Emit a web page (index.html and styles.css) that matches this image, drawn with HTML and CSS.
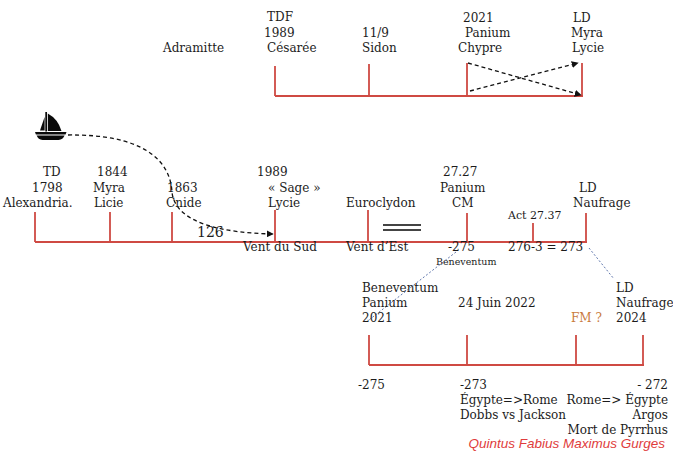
FILE: index.html
```html
<!DOCTYPE html>
<html lang="fr">
<head>
<meta charset="utf-8">
<title>Chronologie</title>
<link rel="stylesheet" href="styles.css">
</head>
<body>
<div class="canvas">
<svg class="diagram" width="673" height="461" viewBox="0 0 673 461" xmlns="http://www.w3.org/2000/svg">
  <defs>
    <marker id="arr" viewBox="0 0 10 10" refX="9" refY="5" markerWidth="7" markerHeight="7" orient="auto" markerUnits="userSpaceOnUse">
      <path d="M0,0 L10,5 L0,10 Z" fill="#111"/>
    </marker>
  </defs>

  <!-- top timeline -->
  <g class="red">
    <line x1="275" y1="96" x2="583" y2="96"/>
    <line x1="275" y1="66" x2="275" y2="96"/>
    <line x1="369" y1="64" x2="369" y2="96"/>
    <line x1="467" y1="63" x2="467" y2="96"/>
    <line x1="582" y1="63" x2="582" y2="96"/>
  </g>
  <g class="dash">
    <line x1="468" y1="63" x2="581" y2="95" marker-end="url(#arr)"/>
    <line x1="470" y1="91" x2="578" y2="63" marker-end="url(#arr)"/>
  </g>
  <g class="lbl">
    <text x="267" y="21">TDF</text>
    <text x="264" y="36.5">1989</text>
    <text x="267" y="51.5">Césarée</text>
    <text x="163" y="51.5">Adramitte</text>
    <text x="362" y="36.5">11/9</text>
    <text x="362" y="51.5">Sidon</text>
    <text x="463" y="21.5">2021</text>
    <text x="465" y="36.5">Panium</text>
    <text x="458" y="51.5">Chypre</text>
    <text x="573" y="21.5">LD</text>
    <text x="571" y="36.5">Myra</text>
    <text x="572" y="51.5">Lycie</text>
  </g>

  <!-- boat -->
  <g class="boat">
    <rect x="45.3" y="112" width="1.7" height="19.5"/>
    <path d="M47.8,113.5 Q58,119 61.5,131 L47.8,131 Z"/>
    <path d="M44.6,117 L44.6,130.5 L40,130.5 Z"/>
    <path d="M35,132 L66.5,132 L65.6,134.4 L35.9,134.4 Z"/>
    <path d="M36.6,135.6 L64.6,135.6 Q63,139.8 58.5,140 L42.5,140 Q38.2,139.8 36.6,135.6 Z"/>
  </g>
  <path class="dash" d="M68,135 C140,134 170,158 172,192 C175,224 225,233 273,234" marker-end="url(#arr)"/>

  <!-- main timeline -->
  <g class="red">
    <line x1="35" y1="242" x2="587" y2="242"/>
    <line x1="35" y1="212" x2="35" y2="242"/>
    <line x1="110" y1="212" x2="110" y2="242"/>
    <line x1="172" y1="212" x2="172" y2="242"/>
    <line x1="275" y1="210" x2="275" y2="242"/>
    <line x1="368" y1="210" x2="368" y2="242"/>
    <line x1="467" y1="213" x2="467" y2="242"/>
    <line x1="533" y1="223" x2="533" y2="242"/>
    <line x1="586" y1="213" x2="586" y2="242"/>
  </g>
  <g class="eq">
    <line x1="383" y1="225" x2="421" y2="225"/>
    <line x1="383" y1="230" x2="421" y2="230"/>
  </g>
  <g class="lbl">
    <text x="43" y="176">TD</text>
    <text x="32" y="191.5">1798</text>
    <text x="3" y="206.5">Alexandria.</text>
    <text x="97" y="176">1844</text>
    <text x="93" y="191.5">Myra</text>
    <text x="94" y="206.5">Licie</text>
    <text x="167" y="191.5">1863</text>
    <text x="166" y="206.5">Cnide</text>
    <text x="257" y="176">1989</text>
    <text x="268" y="191.5">« Sage »</text>
    <text x="268" y="206.5">Lycie</text>
    <text x="243" y="251">Vent du Sud</text>
    <text x="346" y="206.5">Euroclydon</text>
    <text x="346" y="251">Vent d’Est</text>
    <text x="443" y="176">27.27</text>
    <text x="440" y="191.5">Panium</text>
    <text x="452" y="206.5">CM</text>
    <text x="579" y="191.5">LD</text>
    <text x="573" y="206.5">Naufrage</text>
    <text x="448" y="251">-275</text>
    <text x="508" y="251">276-3 = 273</text>
  </g>
  <text class="lbl big" x="197" y="236.5">126</text>
  <text class="lbl mid" x="508" y="219">Act 27.37</text>
  <text class="lbl small" x="436" y="264.5">Beneventum</text>

  <g class="dot">
    <line x1="456" y1="252" x2="369" y2="320"/>
    <line x1="589" y1="248" x2="614" y2="279"/>
  </g>

  <!-- bottom timeline -->
  <g class="red">
    <line x1="369" y1="365" x2="644" y2="365"/>
    <line x1="369" y1="335" x2="369" y2="365"/>
    <line x1="467" y1="335" x2="467" y2="365"/>
    <line x1="576" y1="335" x2="576" y2="365"/>
    <line x1="643" y1="335" x2="643" y2="365"/>
  </g>
  <g class="lbl">
    <text x="362" y="291.5">Beneventum</text>
    <text x="362" y="307">Panium</text>
    <text x="362" y="322">2021</text>
    <text x="458" y="307">24 Juin 2022</text>
    <text x="616" y="291.5">LD</text>
    <text x="616" y="307">Naufrage</text>
    <text x="616" y="322">2024</text>
    <text x="358" y="389">-275</text>
    <text x="460" y="389">-273</text>
    <text x="460" y="404">Égypte=&gt;Rome</text>
    <text x="460" y="419">Dobbs vs Jackson</text>
  </g>
  <text class="lbl orange" x="571" y="322">FM ?</text>
  <g class="lbl end">
    <text x="668" y="389">- 272</text>
    <text x="668" y="404">Rome=&gt; Égypte</text>
    <text x="668" y="419">Argos</text>
    <text x="668" y="434">Mort de Pyrrhus</text>
  </g>
  <text class="quote" x="665" y="448">Quintus Fabius Maximus Gurges</text>
</svg>
</div>
</body>
</html>
```

FILE: styles.css
```css
html, body {
  margin: 0;
  padding: 0;
  background: #ffffff;
}

.canvas {
  width: 673px;
  height: 461px;
  overflow: hidden;
  background: #ffffff;
}

.diagram {
  display: block;
}

.red line {
  stroke: #cf4a43;
  stroke-width: 1.8;
}

.dash,
.dash line {
  fill: none;
  stroke: #111111;
  stroke-width: 1.3;
  stroke-dasharray: 4 3;
}

.eq line {
  stroke: #444444;
  stroke-width: 2;
}

.dot line {
  stroke: #6077ad;
  stroke-width: 1;
  stroke-dasharray: 2 2;
}

.boat {
  fill: #0a0a0a;
}

.lbl {
  font-family: "DejaVu Serif", "Liberation Serif", serif;
  font-size: 12px;
  fill: #1c1c1c;
}

.lbl.big {
  font-size: 14px;
}

.lbl.mid {
  font-size: 11px;
}

.lbl.small {
  font-size: 9.5px;
}

.lbl.orange {
  fill: #c97a3c;
}

.end text {
  text-anchor: end;
}

.quote {
  font-family: "Liberation Sans", Arial, sans-serif;
  font-style: italic;
  font-size: 13.5px;
  fill: #e03c3c;
  text-anchor: end;
}
```
